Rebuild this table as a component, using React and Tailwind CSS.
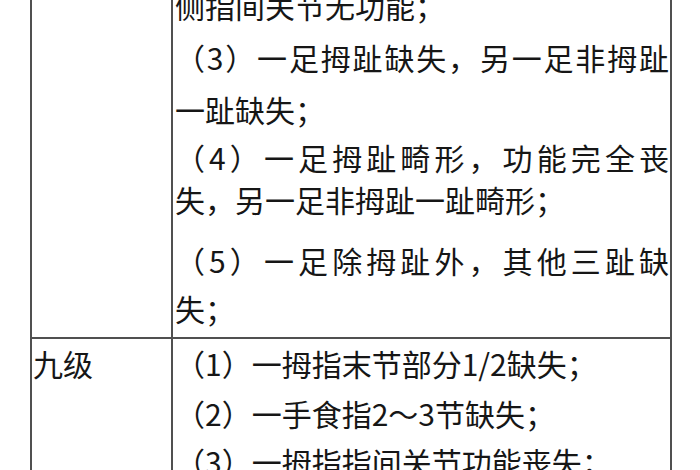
import React from "react";

const Line = ({children, justify, className = ""}) => (
    <div
        className={"h-[48px] leading-[48px] whitespace-nowrap " + (justify ? "text-justify [text-align-last:justify] " : "") + className}>
        {children}
    </div>
)

const App = () => {
    return (
        <div className="w-[700px] h-[470px] overflow-hidden bg-white text-[#161616] text-[30px]"
             style={{fontFamily: '"Noto Sans CJK SC", "Noto Sans", sans-serif'}}>
            <div className="ml-[30px] w-[642px] -mt-[19px] border-x-2 border-[#505050]">
                {/* 八级 continued */}
                <div className="flex">
                    <div className="w-[141px] shrink-0 border-r-2 border-[#505050]"></div>
                    <div className="flex-1 pl-[2px] pr-[1px] pb-[5px]">
                        <Line>侧指间关节无功能；</Line>
                        <Line justify className="mt-[4px]">（3）一足拇趾缺失，另一足非拇趾</Line>
                        <Line className="mt-[4px]">一趾缺失；</Line>
                        <Line justify>（4）一足拇趾畸形，功能完全丧</Line>
                        <Line className="-mt-[6px]">失，另一足非拇趾一趾畸形；</Line>
                        <Line justify className="mt-[13px]">（5）一足除拇趾外，其他三趾缺</Line>
                        <Line>失；</Line>
                    </div>
                </div>

                {/* 九级 */}
                <div className="flex border-t-2 border-[#505050]">
                    <div className="w-[141px] shrink-0 border-r-2 border-[#505050] pl-[1px]">
                        <Line>九级</Line>
                    </div>
                    <div className="flex-1 pl-[2px] pr-[1px]">
                        <Line>（1）一拇指末节部分1/2缺失；</Line>
                        <Line className="mt-[2px]">（2）一手食指2～3节缺失；</Line>
                        <Line>（3）一拇指指间关节功能丧失；</Line>
                    </div>
                </div>
            </div>
        </div>
    )
}

export default App
